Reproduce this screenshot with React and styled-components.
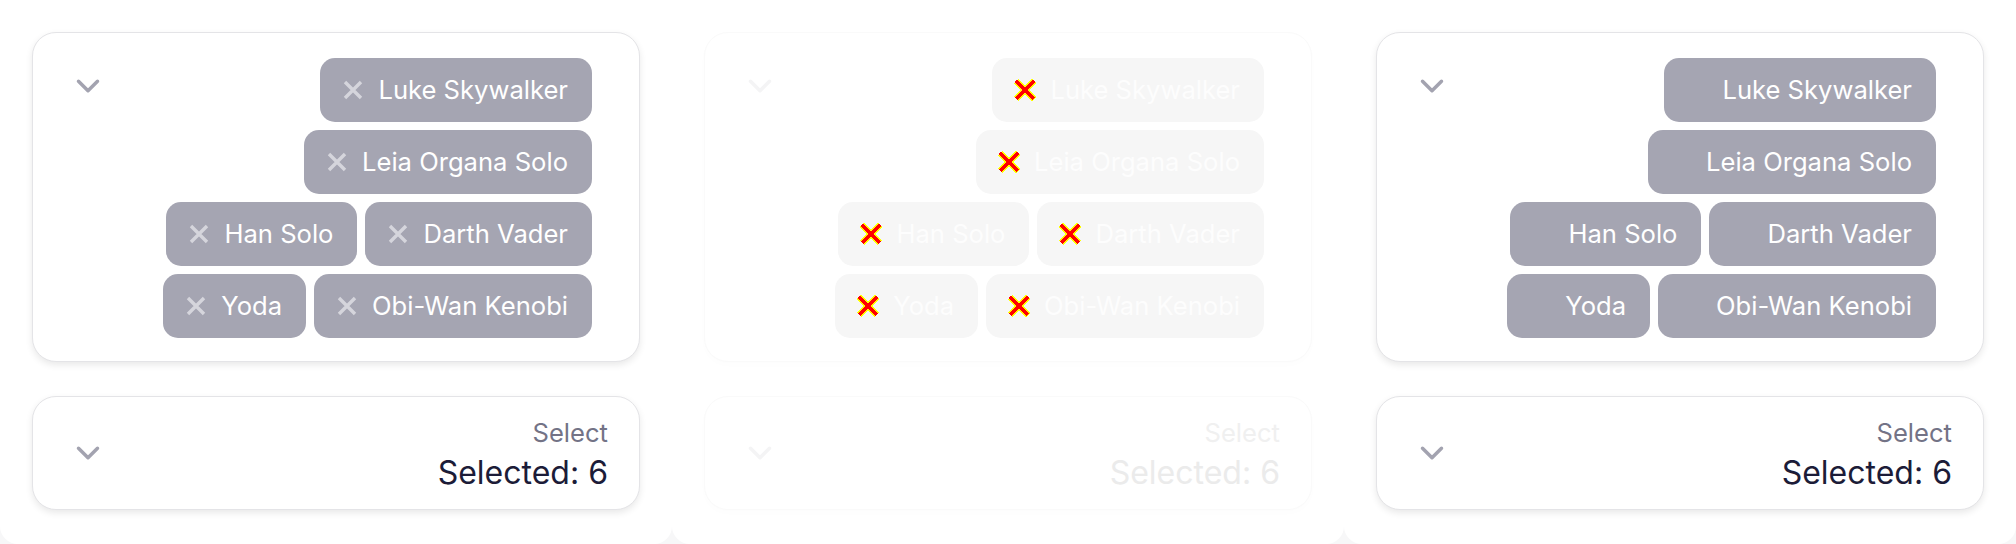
import React from "react";
import styled, { createGlobalStyle } from "styled-components";

const GlobalStyle = createGlobalStyle`
  html, body {
    margin: 0;
    padding: 0;
    background: #f7f7f8;
  }
  body {
    font-family: Inter, "Noto Sans", "Liberation Sans", sans-serif;
  }
`;

const characters = [
  "Luke Skywalker",
  "Leia Organa Solo",
  "Han Solo",
  "Darth Vader",
  "Yoda",
  "Obi-Wan Kenobi",
];

// palettes for each preview column
const palettes = {
  normal: {
    border: "#e4e4e7",
    shadow: "0 3px 7px rgba(0, 0, 0, 0.09)",
    chip: "#a5a5b2",
    chipText: "#ffffff",
    icon: "#d5d5dc",
    chevron: "#a3a3b0",
    label: "#737386",
    value: "#1c1c38",
  },
  faded: {
    border: "#fafafa",
    shadow: "0 3px 7px rgba(0, 0, 0, 0.012)",
    chip: "#f6f6f6",
    chipText: "#fdfdfd",
    icon: "#ff0000",
    chevron: "#f4f4f5",
    label: "#f0f0f0",
    value: "#ebebeb",
  },
};

export default function App() {
  return (
    <>
      <GlobalStyle />
      <Page>
        <Preview variant="normal" />
        <Preview variant="faded" />
        <Preview variant="normal" hideIcons />
      </Page>
    </>
  );
}

function Preview({ variant, hideIcons }) {
  const p = palettes[variant];
  return (
    <Panel>
      <Card p={p} $tall>
        <ChevronSlot $top>
          <Chevron color={p.chevron} />
        </ChevronSlot>
        <ChipList>
          {characters.map((name) => (
            <Chip key={name} p={p}>
              <IconSlot $hidden={hideIcons}>
                {variant === "faded" ? <BrokenX /> : <CloseX color={p.icon} />}
              </IconSlot>
              <span>{name}</span>
            </Chip>
          ))}
        </ChipList>
      </Card>
      <Card p={p}>
        <ChevronSlot>
          <Chevron color={p.chevron} />
        </ChevronSlot>
        <Summary>
          <Label p={p}>Select</Label>
          <Value p={p}>Selected: 6</Value>
        </Summary>
      </Card>
    </Panel>
  );
}

function Chevron({ color }) {
  return (
    <svg width="38" height="38" viewBox="0 0 24 24" fill="none">
      <path
        d="M6 9l6 6 6-6"
        stroke={color}
        strokeWidth="2.2"
        strokeLinecap="round"
        strokeLinejoin="round"
      />
    </svg>
  );
}

function CloseX({ color }) {
  return (
    <svg width="22" height="22" viewBox="0 0 22 22" fill="none">
      <path d="M3 3l16 16M19 3L3 19" stroke={color} strokeWidth="3.4" />
    </svg>
  );
}

function BrokenX() {
  return (
    <svg width="22" height="22" viewBox="0 0 22 22" fill="none" shapeRendering="crispEdges">
      <path d="M2 2l18 18M20 2L2 20" stroke="#ffff00" strokeWidth="6.4" />
      <path d="M2 2l18 18M20 2L2 20" stroke="#ff0000" strokeWidth="3.8" />
    </svg>
  );
}

const Page = styled.div`
  display: flex;
  width: 2016px;
  height: 544px;
  overflow: hidden;
`;

const Panel = styled.section`
  box-sizing: border-box;
  width: 672px;
  height: 544px;
  padding: 32px;
  display: flex;
  flex-direction: column;
  gap: 34px;
  background: #ffffff;
  border-radius: 0 0 18px 18px;
`;

const Card = styled.div`
  box-sizing: border-box;
  display: flex;
  align-items: ${(props) => (props.$tall ? "flex-start" : "center")};
  padding: ${(props) => (props.$tall ? "25px 47px 23px 36px" : "20px 31px 16px 36px")};
  border: 1.5px solid ${(props) => props.p.border};
  border-radius: 24px;
  background: #ffffff;
  box-shadow: ${(props) => props.p.shadow};
`;

const ChevronSlot = styled.div`
  display: flex;
  margin: ${(props) => (props.$top ? "9px 0 0" : "0 0 4px")};
`;

const ChipList = styled.div`
  flex: 1;
  display: flex;
  flex-wrap: wrap;
  justify-content: flex-end;
  gap: 8px;
  margin-left: 40px;
`;

const Chip = styled.div`
  box-sizing: border-box;
  height: 64px;
  display: flex;
  align-items: center;
  gap: 14px;
  padding: 0 24px 0 22px;
  border-radius: 15px;
  background: ${(props) => props.p.chip};
  color: ${(props) => props.p.chipText};
  font-size: 25.6px;
  line-height: 1;
  white-space: nowrap;
`;

const IconSlot = styled.span`
  display: flex;
  visibility: ${(props) => (props.$hidden ? "hidden" : "visible")};
`;

const Summary = styled.div`
  flex: 1;
  display: flex;
  flex-direction: column;
  align-items: flex-end;
  gap: 4px;
`;

const Label = styled.div`
  font-size: 25.6px;
  line-height: 32px;
  color: ${(props) => props.p.label};
`;

const Value = styled.div`
  font-size: 32px;
  line-height: 40px;
  color: ${(props) => props.p.value};
`;
